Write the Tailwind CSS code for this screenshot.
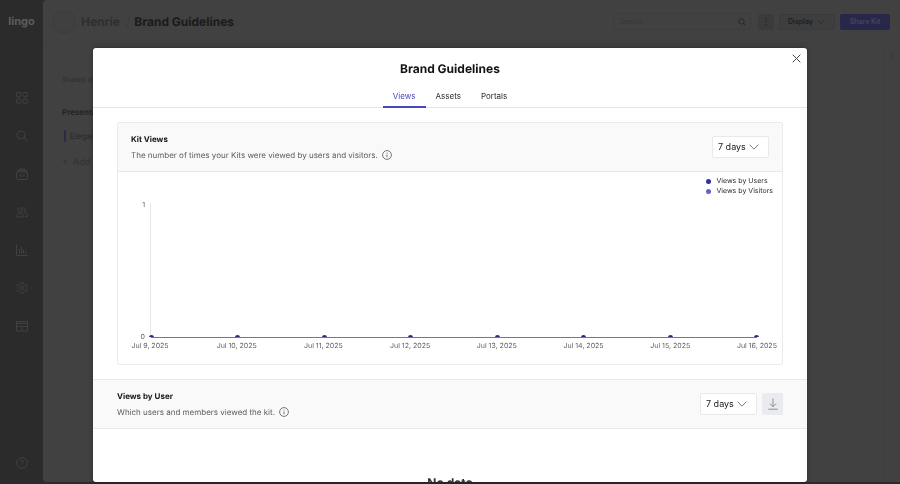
<!DOCTYPE html>
<html lang="en">
<head>
<meta charset="utf-8">
<meta name="viewport" content="width=device-width, initial-scale=1">
<title>Brand Guidelines</title>
<script src="https://cdn.jsdelivr.net/npm/@tailwindcss/browser@4"></script>
</head>
<body class="h-screen overflow-hidden bg-[#2b2b2b] font-['Inter',sans-serif] text-[8px] leading-3 text-[#2b2b2b] [text-rendering:geometricPrecision]">

<!-- Application behind the dialog -->
<div class="flex h-full">
  <nav class="flex w-[43px] shrink-0 flex-col items-center pt-[13px] pb-[15px] text-[#404040]" aria-label="Main">
    <a href="#" class="text-[11px] leading-4 font-bold text-[#5c5c5c]">lingo</a>
    <div class="mt-[63px] flex flex-col gap-[26px]">
      <a href="#" aria-label="Kits"><svg class="size-3" viewBox="0 0 12 12" fill="none" stroke="currentColor"><rect x=".5" y=".5" width="4.200" height="4.200" rx=".5"/><rect x="7" y=".5" width="4.200" height="4.200" rx=".5"/><rect x=".5" y="7" width="4.200" height="4.200" rx=".5"/><rect x="7" y="7" width="4.200" height="4.200" rx=".5"/></svg></a>
      <a href="#" aria-label="Search"><svg class="size-3" viewBox="0 0 12 12" fill="none" stroke="currentColor"><circle cx="5" cy="5" r="4"/><path d="M8 8l3.500 3.500"/></svg></a>
      <a href="#" aria-label="Library"><svg class="size-3" viewBox="0 0 12 12" fill="none" stroke="currentColor"><rect x=".5" y="4" width="11" height="7.500" rx="1"/><path d="M1.500 4V2.500h9V4M3.500 2.500V1h5v1.500M4 6.500v1.500h4V6.500"/></svg></a>
      <a href="#" aria-label="Members"><svg class="size-3" viewBox="0 0 12 12" fill="none" stroke="currentColor"><circle cx="4" cy="4" r="2.200"/><path d="M.6 11c0-5 6.800-5 6.800 0zM6.500 2a2.200 2.200 0 1 1 1 4.200c2.500 0 3.800 1.500 3.900 4.300H9"/></svg></a>
      <a href="#" aria-label="Insights"><svg class="size-3" viewBox="0 0 12 12" fill="none" stroke="currentColor"><path d="M.5.5v11H12M3.500 9.500V5M5.500 9.500V3M7.500 9.500V5.500M9.500 9.500V7"/></svg></a>
      <a href="#" aria-label="Settings"><svg class="size-3" viewBox="0 0 12 12" fill="none" stroke="currentColor"><circle cx="6" cy="6" r="1.800"/><path d="M5 .8h2l.5 1.400 1.200.6 1.400-.4 1 1.700-1 1.200v1.400l1 1.200-1 1.700-1.400-.4-1.200.6L7 11.200H5l-.5-1.400-1.200-.6-1.400.4-1-1.700 1-1.200V5.300l-1-1.200 1-1.700 1.400.4 1.200-.6z"/></svg></a>
      <a href="#" aria-label="Portals"><svg class="size-3" viewBox="0 0 12 12" fill="none" stroke="currentColor"><path d="M.5 1.500h11v9.500H.5zM.5 6.500h11M6 6.500V11M.5 3.500h11"/></svg></a>
    </div>
    <a href="#" class="mt-auto" aria-label="Help"><svg class="size-3" viewBox="0 0 12 12" fill="none" stroke="currentColor"><circle cx="6" cy="6" r="5.300"/><path d="M4.500 5c0-2 3-2 3 0 0 1-1.500 1-1.500 2M6 8v1"/></svg></a>
  </nav>

  <div class="mb-0.5 flex min-w-0 flex-1 flex-col rounded-l-[4px] bg-[#414141]">
    <header class="flex h-11 items-center border-b border-[#3e3e3e] pr-[10px] pl-[9px]">
      <span class="flex size-6 items-center justify-center rounded-full border border-[#3d3d3d] bg-[#3f3f3f]">
        <svg class="h-2 w-4" viewBox="0 0 16 8" stroke="#454545" fill="none"><path d="M0 1h16M0 4h16M0 7h16"/></svg>
      </span>
      <a href="#" class="ml-[5px] text-[12px] leading-4 font-bold text-[#2f2f2f]">Henrie</a>
      <span class="ml-1.5 text-[12px] leading-4 text-[#3a3a3a]">/</span>
      <h1 class="ml-1 text-[12px] leading-4 font-bold text-[#1a1a1a]">Brand Guidelines</h1>
      <div class="ml-auto flex items-center gap-[5px]">
        <label class="mr-0.5 flex h-[17px] w-[138px] items-center justify-between rounded-[2px] border border-[#3d3d3d] pr-1 pl-1.5">
          <input type="search" placeholder="Search" aria-label="Search" class="min-w-0 flex-1 bg-transparent text-[7px] outline-none placeholder:text-[#363636]">
          <svg class="size-2" viewBox="0 0 8 8" fill="none" stroke="#282828"><circle cx="3.500" cy="3.500" r="2.700"/><path d="M5.500 5.500l2 2"/></svg>
        </label>
        <button type="button" aria-label="More" class="flex size-4 items-center justify-center rounded-[2px] bg-[#3b3b3b]"><svg class="h-2 w-1" viewBox="0 0 4 8" fill="#252525"><circle cx="2" cy="1" r=".8"/><circle cx="2" cy="4" r=".8"/><circle cx="2" cy="7" r=".8"/></svg></button>
        <button type="button" class="flex h-4 w-14 items-center gap-1 rounded-[2px] border border-[#3a3a3a] bg-[#3e3e3e] pl-2 text-[7px] font-semibold text-[#1f1f1f]">Display <svg class="h-1 w-2" viewBox="0 0 8 4" fill="none" stroke="#2c2c2c"><path d="M1 .5l3 3 3-3"/></svg></button>
        <button type="button" class="flex h-4 w-[50px] items-center justify-center rounded-[2px] bg-[#292749] text-[7px] font-semibold text-[#454462]">Share Kit</button>
      </div>
    </header>
    <div class="flex flex-1">
      <aside class="flex-1 pt-[30px] pl-[19px]">
        <p class="text-[7px] leading-3 text-[#2d2d2d]">Shared documents</p>
        <h2 class="mt-5 font-semibold text-[#202020]">Presentation</h2>
        <p class="mt-3 ml-0.5 border-l-2 border-[#2c2a48] pl-1 text-[#282828]">Elegant</p>
        <button type="button" class="mt-3.5 text-[9px] text-[#323232]">+ &nbsp;Add Section</button>
      </aside>
      <div class="flex w-[17px] justify-center border-l border-[#3f3f3f] pt-2">
        <svg class="h-2 w-1" viewBox="0 0 4 8" fill="none" stroke="#303030"><path d="M3.500 1l-3 3 3 3"/></svg>
      </div>
    </div>
  </div>
</div>

<!-- Dialog -->
<div class="fixed inset-0 flex justify-center pt-12 pb-0.5">
  <section role="dialog" aria-modal="true" aria-labelledby="title" class="relative flex w-full max-w-[714px] flex-col overflow-hidden rounded-[3px] bg-white shadow-[0_0_4px_#0005]">
    <button type="button" aria-label="Close" class="absolute top-1 right-1 p-0.5"><svg class="size-[9px]" viewBox="0 0 9 9" fill="none" stroke="#444"><path d="M.7.7l7.600 7.600M8.300.7L.7 8.300"/></svg></button>
    <header class="flex shrink-0 flex-col items-center border-b border-[#e4e4e6] pt-[13px]">
      <h2 id="title" class="text-[12px] leading-4 font-bold text-[#141414]">Brand Guidelines</h2>
      <div role="tablist" class="mt-3 -mb-px flex">
        <button type="button" role="tab" aria-selected="true" class="h-[19px] border-b-2 border-[#4a47bd] px-2.5 pb-1 text-[#4a47bd]">Views</button>
        <button type="button" role="tab" aria-selected="false" class="h-[19px] border-b-2 border-transparent px-2.5 pb-1">Assets</button>
        <button type="button" role="tab" aria-selected="false" class="h-[19px] border-b-2 border-transparent px-2.5 pb-1">Portals</button>
      </div>
    </header>

    <div class="min-h-0 flex-1 overflow-hidden">
      <article class="mx-6 mt-3.5 rounded-[2px] border border-[#ebebed]">
        <header class="flex items-center justify-between border-b border-[#e8e8ea] bg-[#f9f9f9] px-[13px] py-2.5">
          <div>
            <h3 class="font-bold text-[#141414]">Kit Views</h3>
            <p class="mt-1 flex items-center gap-1 text-[#5c5c5c]">The number of times your Kits were viewed by users and visitors.
              <svg class="size-2.5" viewBox="0 0 10 10" fill="none" stroke="#555" stroke-width=".8"><circle cx="5" cy="5" r="4.400"/><path d="M5 4.500v2.800M5 2.700v.9"/></svg></p>
          </div>
          <div class="relative">
            <select aria-label="Kit views period" class="h-[22px] w-[57px] appearance-none rounded-[2px] border border-[#e9e9eb] bg-white pl-[5px] text-[9px] text-[#222]"><option>7 days</option><option>30 days</option></select>
            <svg class="pointer-events-none absolute top-2 right-2.5 h-1.5 w-2.5" viewBox="0 0 10 6" fill="none" stroke="#555" stroke-width=".8"><path d="M.7.7L5 5.200 9.300.7"/></svg>
          </div>
        </header>

        <div class="pt-1 pb-[13px]">
          <ul class="mr-[9px] ml-auto w-fit text-[7px] leading-[10px]">
            <li class="flex items-center gap-[5px]"><span class="size-[5px] rounded-full bg-[#3330a0]"></span>Views by Users</li>
            <li class="flex items-center gap-[5px]"><span class="size-[5px] rounded-full bg-[#6462c4]"></span>Views by Visitors</li>
          </ul>
          <div class="mt-1 mr-[25px] flex text-[7px] leading-[10px] text-[#5c5c5c]">
            <div class="flex w-8 flex-col justify-between pr-[5px] text-right"><span>1</span><span>0</span></div>
            <div class="mt-1 mb-1 flex h-[134px] flex-1 items-end border-l border-[#e8e8ea]">
              <div class="flex h-[3px] flex-1 justify-between overflow-x-visible overflow-y-clip border-b border-[#6b6cd4]">
                <i class="flex w-0 justify-center"><b class="size-[5px] shrink-0 rounded-full bg-[#2a2780]"></b></i>
                <i class="flex w-0 justify-center"><b class="size-[5px] shrink-0 rounded-full bg-[#2a2780]"></b></i>
                <i class="flex w-0 justify-center"><b class="size-[5px] shrink-0 rounded-full bg-[#2a2780]"></b></i>
                <i class="flex w-0 justify-center"><b class="size-[5px] shrink-0 rounded-full bg-[#2a2780]"></b></i>
                <i class="flex w-0 justify-center"><b class="size-[5px] shrink-0 rounded-full bg-[#2a2780]"></b></i>
                <i class="flex w-0 justify-center"><b class="size-[5px] shrink-0 rounded-full bg-[#2a2780]"></b></i>
                <i class="flex w-0 justify-center"><b class="size-[5px] shrink-0 rounded-full bg-[#2a2780]"></b></i>
                <i class="flex w-0 justify-center"><b class="size-[5px] shrink-0 rounded-full bg-[#2a2780]"></b></i>
              </div>
            </div>
          </div>
          <div class="-mt-px mr-[25px] ml-8 flex justify-between text-[7px] leading-[10px] whitespace-nowrap text-[#5c5c5c]">
            <span class="flex w-0 justify-center">Jul 9, 2025</span>
            <span class="flex w-0 justify-center">Jul 10, 2025</span>
            <span class="flex w-0 justify-center">Jul 11, 2025</span>
            <span class="flex w-0 justify-center">Jul 12, 2025</span>
            <span class="flex w-0 justify-center">Jul 13, 2025</span>
            <span class="flex w-0 justify-center">Jul 14, 2025</span>
            <span class="flex w-0 justify-center">Jul 15, 2025</span>
            <span class="flex w-0 justify-center">Jul 16, 2025</span>
          </div>
        </div>
      </article>

      <section class="mt-3.5">
        <header class="flex items-center justify-between border-y border-[#e8e8ea] bg-[#f9f9f9] px-6 py-2.5">
          <div>
            <h3 class="font-bold text-[#141414]">Views by User</h3>
            <p class="mt-1 flex items-center gap-1 text-[#5c5c5c]">Which users and members viewed the kit.
              <svg class="size-2.5" viewBox="0 0 10 10" fill="none" stroke="#555" stroke-width=".8"><circle cx="5" cy="5" r="4.400"/><path d="M5 4.500v2.800M5 2.700v.9"/></svg></p>
          </div>
          <div class="flex gap-[5px]">
            <div class="relative">
              <select aria-label="Views by user period" class="h-[22px] w-[57px] appearance-none rounded-[2px] border border-[#e9e9eb] bg-white pl-[5px] text-[9px] text-[#222]"><option>7 days</option><option>30 days</option></select>
              <svg class="pointer-events-none absolute top-2 right-2.5 h-1.5 w-2.5" viewBox="0 0 10 6" fill="none" stroke="#555" stroke-width=".8"><path d="M.7.7L5 5.200 9.300.7"/></svg>
            </div>
            <button type="button" aria-label="Download" class="flex h-[22px] w-[21px] items-center justify-center rounded-[2px] bg-[#e9ebee]"><svg class="h-3 w-2.5" viewBox="0 0 10 12" fill="none" stroke="#777" stroke-width=".8"><path d="M5 .5v8M1.800 5.500L5 8.700l3.200-3.200M.3 11.200h9.400"/></svg></button>
          </div>
        </header>
        <p class="pt-[46px] text-center text-[12px] leading-4 font-bold text-[#333]">No data</p>
      </section>
    </div>
  </section>
</div>
</body>
</html>
